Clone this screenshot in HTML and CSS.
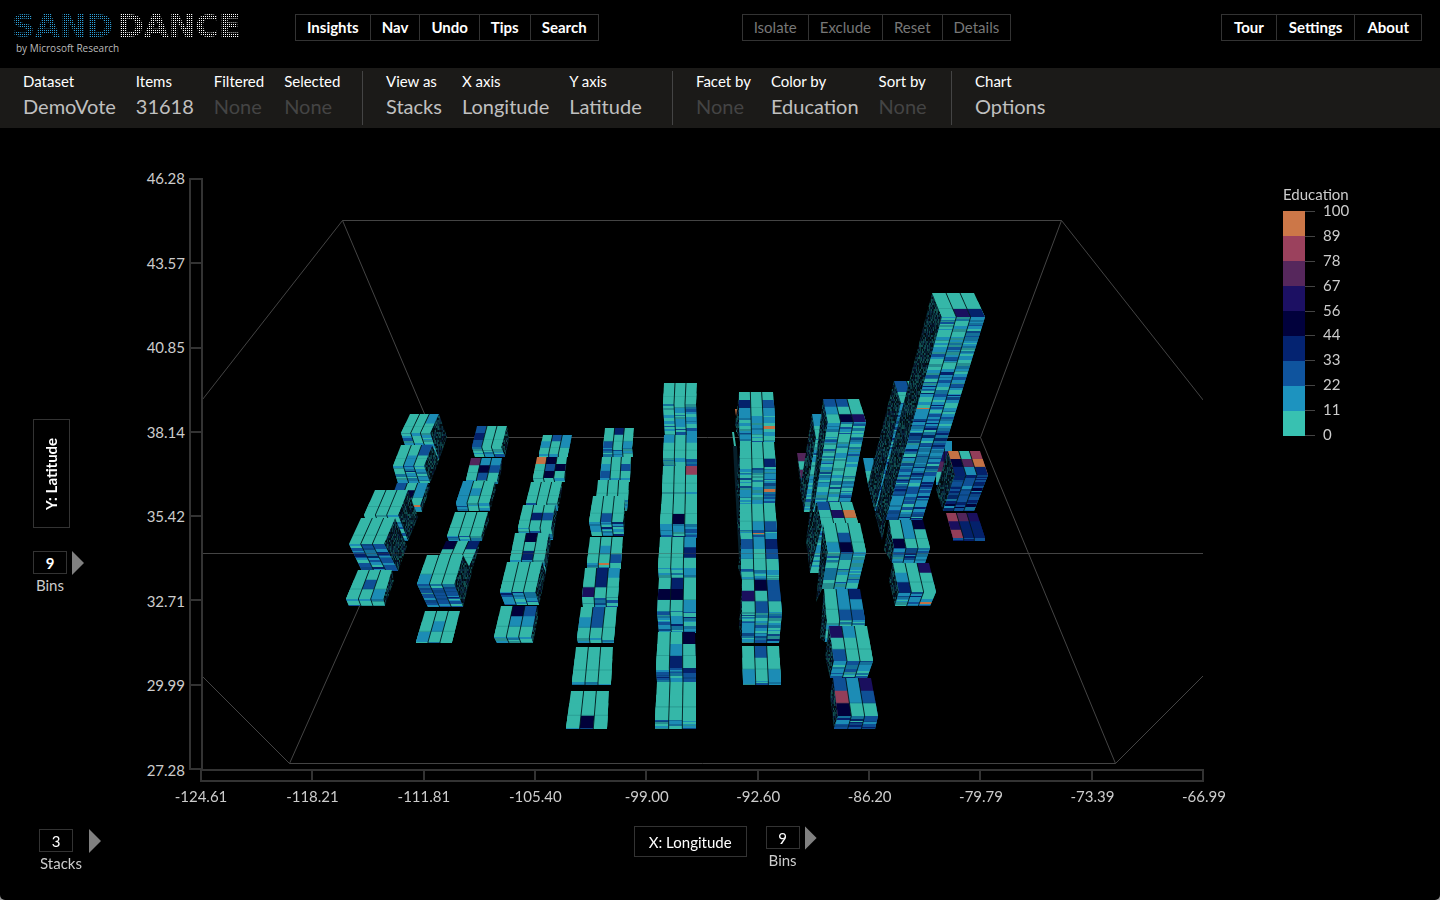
FILE: index.html
```html
<!DOCTYPE html>
<html lang="en">
<head>
    <meta charset="UTF-8">
    <meta name="viewport" content="width=device-width, initial-scale=1.0">
    <title>SandDance</title>
    <link rel="stylesheet" href="styles.css">
</head>
<body>
<div class="app">
    <header class="header">
        <div class="brand">
            <div class="logo"><span class="logo-sand">SAND</span><span class="logo-dance">DANCE</span></div>
            <div class="byline">by Microsoft Research</div>
        </div>
        <nav class="btn-group">
            <button>Insights</button>
            <button>Nav</button>
            <button>Undo</button>
            <button>Tips</button>
            <button>Search</button>
        </nav>
        <div class="btn-group selection-group">
            <button disabled>Isolate</button>
            <button disabled>Exclude</button>
            <button disabled>Reset</button>
            <button disabled>Details</button>
        </div>
        <div class="btn-group right-group">
            <button>Tour</button>
            <button>Settings</button>
            <button>About</button>
        </div>
    </header>

    <div class="toolbar">
        <div class="tool-group data-group">
            <div class="field"><span id="lDataset">Dataset</span><button aria-labelledby="lDataset">DemoVote</button></div>
            <div class="field"><span>Items</span><output>31618</output></div>
            <div class="field"><span>Filtered</span><output class="none">None</output></div>
            <div class="field"><span>Selected</span><output class="none">None</output></div>
        </div>
        <div class="tool-group view-group">
            <div class="field"><span id="lView">View as</span><button aria-labelledby="lView">Stacks</button></div>
            <div class="field"><span id="lX">X axis</span><button aria-labelledby="lX">Longitude</button></div>
            <div class="field"><span id="lY">Y axis</span><button aria-labelledby="lY">Latitude</button></div>
        </div>
        <div class="tool-group map-group">
            <div class="field"><span id="lFacet">Facet by</span><button class="none" aria-labelledby="lFacet">None</button></div>
            <div class="field"><span id="lColor">Color by</span><button aria-labelledby="lColor">Education</button></div>
            <div class="field"><span id="lSort">Sort by</span><button class="none" aria-labelledby="lSort">None</button></div>
        </div>
        <div class="tool-group">
            <div class="field"><span id="lChart">Chart</span><button aria-labelledby="lChart">Options</button></div>
        </div>
    </div>

    <main class="chart">
        <div class="y-controls">
            <button class="axis-btn vertical">Y: Latitude</button>
            <div class="stepper">
                <div class="stepper-row">
                    <input type="text" id="yBins" class="bold" value="9">
                    <button class="arrow" aria-label="More Y bins"></button>
                </div>
                <label for="yBins">Bins</label>
            </div>
        </div>

        <div class="y-labels">
            <span>46.28</span><span>43.57</span><span>40.85</span><span>38.14</span><span>35.42</span><span>32.71</span><span>29.99</span><span>27.28</span>
        </div>
        <div class="y-axis"><i></i><i></i><i></i><i></i><i></i><i></i><i></i></div>

        <canvas id="plot" class="plot" width="1000" height="592"></canvas>

        <div class="legend">
            <div class="legend-title">Education</div>
            <div class="legend-body">
                <div class="legend-bar">
                    <i class="c8"></i><i class="c7"></i><i class="c6"></i><i class="c5"></i><i class="c4"></i><i class="c3"></i><i class="c2"></i><i class="c1"></i><i class="c0"></i>
                </div>
                <div class="legend-ticks"><i></i><i></i><i></i><i></i><i></i><i></i><i></i><i></i><i></i><i></i></div>
                <div class="legend-labels">
                    <span>100</span><span>89</span><span>78</span><span>67</span><span>56</span><span>44</span><span>33</span><span>22</span><span>11</span><span>0</span>
                </div>
            </div>
        </div>

        <div class="x-axis"><i></i><i></i><i></i><i></i><i></i><i></i><i></i><i></i><i></i></div>
        <div class="x-labels">
            <span>-124.61</span><span>-118.21</span><span>-111.81</span><span>-105.40</span><span>-99.00</span><span>-92.60</span><span>-86.20</span><span>-79.79</span><span>-73.39</span><span>-66.99</span>
        </div>
    </main>

    <footer class="footer">
        <div class="stepper stacks">
            <div class="stepper-row">
                <input type="text" id="stacks" value="3">
                <button class="arrow" aria-label="More stacks"></button>
            </div>
            <label for="stacks">Stacks</label>
        </div>
        <div class="x-controls">
            <button class="axis-btn">X: Longitude</button>
            <div class="stepper">
                <div class="stepper-row">
                    <input type="text" id="xBins" value="9">
                    <button class="arrow" aria-label="More X bins"></button>
                </div>
                <label for="xBins">Bins</label>
            </div>
        </div>
    </footer>
</div>
<script src="script.js"></script>
</body>
</html>
```
FILE: styles.css
```css
* {
    margin: 0;
    padding: 0;
    box-sizing: border-box;
}

body {
    font-family: Lato, "Open Sans", sans-serif;
    font-size: 15px;
    background: #999;
    color: #fff;
}

button,
input {
    font: inherit;
    color: inherit;
    background: none;
    border: none;
}

button {
    cursor: pointer;
}

.app {
    min-height: 100vh;
    background: #000;
    border-radius: 0 0 5px 5px;
    overflow: hidden;
}

/* header */
.header {
    display: flex;
    align-items: flex-start;
    height: 68px;
    padding: 14px 18px 0 12px;
}

.brand {
    width: 283px;
}

.logo {
    display: flex;
    gap: 4px;
    height: 24px;
    font-family: "DejaVu Sans", sans-serif;
    font-weight: bold;
    font-size: 32px;
    line-height: 24px;
}

/* letters made of 1px dots on a 2px grid */
.logo span {
    color: transparent;
    background-image:
        repeating-linear-gradient(to right, transparent 0 1px, #000 1px 2px),
        repeating-linear-gradient(to bottom, transparent 0 1px, #000 1px 2px);
    -webkit-background-clip: text;
    background-clip: text;
}

.logo .logo-sand {
    background-color: #2d9fd8;
}

.logo .logo-dance {
    background-color: #fff;
}

.byline {
    margin: 3px 0 0 4px;
    font-family: "Open Sans", sans-serif;
    font-size: 10px;
    line-height: 14px;
    color: #bbb;
}

.btn-group {
    display: flex;
    border: 1px solid #333;
}

.btn-group button {
    height: 25px;
    padding: 0 11px;
    font-weight: bold;
    line-height: 25px;
}

.btn-group button + button {
    border-left: 1px solid #333;
}

.btn-group button:disabled {
    font-weight: normal;
    color: #777;
}

.selection-group {
    margin-left: 143px;
}

.right-group {
    margin-left: auto;
}

.right-group button {
    padding: 0 12px;
}

/* toolbar */
.toolbar {
    display: flex;
    height: 60px;
    padding: 3px 0;
    background: #1b1a18;
}

.tool-group {
    display: flex;
    gap: 20px;
    padding-left: 23px;
}

.tool-group + .tool-group {
    border-left: 1px solid #444;
}

.data-group {
    width: 362px;
}

.view-group {
    width: 310px;
}

.map-group {
    width: 279px;
}

.field {
    display: flex;
    flex-direction: column;
    align-items: flex-start;
}

.field span {
    line-height: 20px;
}

.field button,
.field output {
    font-size: 20px;
    line-height: 30px;
    color: #c0c0c0;
}

.field .none {
    color: #444;
}

/* chart */
.chart {
    display: grid;
    grid-template-columns: 130px 55px 4px 14px 1fr 237px;
    padding-top: 50px;
}

.y-controls {
    display: flex;
    flex-direction: column;
    align-items: flex-start;
    gap: 23px;
    padding: 241px 0 0 33px;
}

.axis-btn {
    height: 31px;
    padding: 0 14px;
    border: 1px solid #333;
}

.axis-btn.vertical {
    width: 37px;
    height: 109px;
    padding: 0;
    writing-mode: vertical-rl;
    rotate: 180deg;
    line-height: 35px;
    font-weight: bold;
}

.stepper-row {
    display: flex;
    gap: 5px;
}

.stepper input {
    width: 34px;
    height: 23px;
    border: 1px solid #333;
    text-align: center;
}

.stepper input.bold {
    font-weight: bold;
}

.stepper label {
    display: block;
    width: 34px;
    line-height: 20px;
    text-align: center;
    color: #ccc;
}

.arrow {
    width: 12px;
    height: 24px;
    background: #808080;
    clip-path: polygon(0 0, 100% 50%, 0 100%);
}

.y-labels,
.y-axis,
.x-axis,
.x-labels,
.legend-labels,
.legend-bar {
    display: flex;
}

.y-labels {
    flex-direction: column;
    justify-content: space-between;
    margin: -10px 0;
    text-align: right;
    line-height: 20px;
    color: #ccc;
}

.y-axis {
    grid-column: 4;
    flex-direction: column;
    border: 2px solid #333;
    border-bottom: none;
}

.y-axis i {
    flex: 1;
    border-bottom: 2px solid #333;
}

.plot {
    display: block;
    width: 100%;
    height: auto;
}

.x-axis {
    grid-column: 5;
    height: 13px;
    margin: -1px -1px 0 -3px;
    border: 2px solid #333;
    border-right: none;
}

.x-axis i {
    flex: 1;
    border-right: 2px solid #333;
}

.x-labels {
    grid-column: 5;
    justify-content: space-between;
    margin: 4px -31px 0 -32px;
    line-height: 20px;
    color: #ccc;
}

.x-labels span {
    width: 60px;
    text-align: center;
}

/* legend */
.legend {
    padding: 6px 0 0 80px;
    color: #ccc;
}

.legend-title {
    line-height: 20px;
}

.legend-body {
    display: flex;
    height: 225px;
    margin-top: 7px;
}

.legend-bar {
    flex-direction: column;
    width: 22px;
}

.legend-bar i {
    flex: 1;
}

.legend-ticks {
    display: flex;
    flex-direction: column;
    justify-content: space-between;
    width: 10px;
}

.legend-ticks i {
    height: 1px;
    background: #444;
}

.legend-labels {
    flex-direction: column;
    justify-content: space-between;
    margin: -11px 0 -8px 8px;
    line-height: 20px;
}

.c0 { background: #38c1b1; }
.c1 { background: #1d93bf; }
.c2 { background: #0f549e; }
.c3 { background: #042371; }
.c4 { background: #01013c; }
.c5 { background: #1c1063; }
.c6 { background: #56275c; }
.c7 { background: #9b415d; }
.c8 { background: #cc7748; }

/* bottom controls */
.footer {
    display: flex;
    align-items: flex-start;
    padding: 20px 0 0 39px;
}

.stacks {
    width: 62px;
    padding-top: 3px;
}

.stacks .stepper-row {
    gap: 16px;
}

.stacks label {
    width: 44px;
}

.x-controls {
    display: flex;
    align-items: flex-start;
    gap: 19px;
    margin-left: 37vw;
}
```
FILE: script.js
```js
var canvas = document.getElementById('plot');
var ctx = canvas.getContext('2d');
ctx.translate(-203, -178);

var colors = ['#35b7a8', '#1c8cb5', '#0f5096', '#04216b', '#01013a', '#1a0f5e', '#52255a', '#933e59', '#c47245'];
var sideColors = ['#03131a', '#061f2a', '#0a3340', '#0d4044', '#0a2740', '#11504f', '#05102a', '#030b10'];

// front face palettes, from light to dark
var tones = ['00000001011100', '0000111011012', '0011112112013', '0112122223123', '2232334233123'];

// back [x, y, w], front [x, y, w], bottom [x, y, w], side corner [x, y] or 0, tone, top face rows
var stacks = [
    [[410,414,29], [401,433,29], [410,460,29], [447,437], 1, '001/000'],
    [[401,445,31], [393,466,31], [398,483,32], [439,461], 2, '002/010'],
    [[397,483,31], [389,505,31], [391,512,31], [430,487], 1, '201/141/000'],
    [[375,490,33], [364,515,34], [374,541,34], [418,517], 1, '000/000'],
    [[361,518,34], [349,544,35], [362,571,36], [407,546], 3, '000'],
    [[358,570,34], [346,599,37], [349,606,36], [394,580], 1, '000/020/001'],

    [[477,426,30], [472,447,29], [475,457,30], [509,438], 1, '200/300/200'],
    [[471,458,31], [466,480,31], [467,484,31], [502,468], 1, '611/042/020'],
    [[463,481,32], [456,503,33], [458,511,32], [496,490], 1, '100/110/100'],
    [[455,512,33], [447,536,34], [449,541,33], [489,520], 1, '000/000'],
    [[446,541,34], [435,566,34], [437,573,34], [479,548], 1, '403/000/000'],
    [[427,555,36], [417,584,37], [428,607,35], [472,572], 3, '000/000/100'],
    [[425,611,35], [416,642,36], [416,643,36], 0, 1, '000/010/100'],

    [[543,435,29], [539,454,29], [539,457,29], 0, 1, '021/101/000'],
    [[537,457,30], [533,478,31], [534,482,31], [566,467], 1, '840/024/040'],
    [[531,482,31], [526,503,31], [527,511,31], [562,490], 1, '000/000'],
    [[523,505,32], [518,528,33], [520,540,33], [557,512], 1, '000/032/000'],
    [[515,533,34], [510,560,34], [512,573,34], [551,542], 1, '040/000/030'],
    [[507,562,35], [500,592,35], [505,605,34], [546,573], 2, '000/000/000'],
    [[501,606,36], [494,637,37], [497,643,36], [538,617], 1, '042/011/000'],

    [[605,428,29], [603,448,29], [603,457,30], 0, 1, '030/000/201'],
    [[602,457,29], [600,478,30], [600,482,30], 0, 1, '000/102/200'],
    [[598,480,31], [596,500,32], [597,511,30], [628,488], 0, '000/000'],
    [[593,496,32], [589,522,34], [592,536,32], [625,505], 2, '000/000/020'],
    [[590,537,33], [587,563,34], [587,569,34], 0, 1, '000/010/002'],
    [[585,568,35], [582,597,36], [583,607,35], 0, 1, '031/030/500'],
    [[581,607,36], [577,638,37], [578,643,36], 0, 1, '020/120/000'],
    [[576,647,37], [572,682,39], [572,685,39], 0, 1, '000/000/000'],
    [[571,691,38], [566,728,41], [566,729,41], 0, 1, '000/000/040'],

    [[664,383,33], [663,404,33], [665,436,32], 0, 1, '000/000'],
    [[664,435,33], [663,458,34], [664,467,33], 0, 1, '101/000/000'],
    [[663,466,34], [662,492,35], [662,495,35], 0, 0, '007/000/000'],
    [[662,494,35], [660,524,37], [661,538,36], 0, 2, '000/000/040'],
    [[660,537,36], [658,568,38], [659,579,37], 0, 1, '001/003/000'],
    [[659,578,37], [657,611,39], [659,633,37], 0, 2, '030/440/001'],
    [[658,632,37], [656,668,40], [657,682,39], 0, 3, '004/010/030'],
    [[657,682,39], [655,720,41], [655,729,41], 0, 1, '000/000/000'],

    [[739,392,34], [739,416,36], [740,442,35], [735,425], 1, '000/302/101'],
    [[740,442,34], [740,467,36], [740,505,35], [736,490], 1, '000/000/003'],
    [[740,504,35], [740,530,37], [741,540,36], [737,525], 1, '000/000/012'],
    [[741,539,36], [741,569,38], [742,580,37], [738,568], 1, '213/102/000'],
    [[742,580,37], [742,612,40], [742,643,37], [739,625], 2, '042/502/020'],
    [[742,646,37], [743,681,38], [743,685,38], 0, 1, '020/000/101'],

    // eastern columns, the low ones behind first
    [[797,453,30], [801,478,30], [805,512,30], [799,474], 3, '600/000/600'],
    [[812,414,34], [816,438,36], [804,512,33], [800,490], 1, '111/000'],
    [[823,399,36], [828,422,38], [815,503,35], [806,542], 1, '220/100/045'],
    [[817,502,35], [822,526,37], [810,573,35], [806,542], 1, '200/058/000'],
    [[823,523,37], [828,552,38], [822,589,35], [816,602], 1, '000/020/140'],
    [[824,589,36], [827,620,38], [825,642,38], [820,638], 0, '013/011/022'],
    [[829,626,38], [834,661,39], [830,678,37], [825,655], 2, '510/000/200'],
    [[833,678,38], [838,716,40], [834,729,41], [830,695], 3, '215/712/400'],

    [[863,458,32], [868,484,32], [875,511,30], [866,475], 2, '111/000'],
    [[894,381,38], [901,403,38], [875,511,34], [868,484], 2, '202/000'],
    [[937,441,15], [936,482,16], [936,485,16], 0, 2, '11/55/66/00'],
    [[932,293,42], [942,317,43], [886,520,36], [875,514], 5, '000/000/053'],
    [[948,451,32], [955,475,33], [943,511,31], [936,490], 4, '807/468/313'],
    [[946,513,31], [953,538,32], [953,541,32], 0, 4, '765/533/733'],
    [[889,520,34], [894,548,36], [892,563,33], [884,550], 2, '014/010/400'],
    [[893,563,36], [899,592,37], [895,606,35], [889,580], 2, '005/100/300']
];

// small seeded generator, so the stripes stay the same on every load
var seed = 7;
function rand() {
    seed = (seed * 16807) % 2147483647;
    return seed / 2147483647;
}

function pick(list) {
    return list[Math.floor(rand() * list.length)];
}

function path(points) {
    ctx.beginPath();
    points.forEach(function (p) {
        ctx.lineTo(p[0], p[1]);
    });
    ctx.closePath();
}

// point on a face between edges a and b: u across, v from a down to b
function at(a, b, u, v) {
    var left = a[0] + (b[0] - a[0]) * v;
    var width = a[2] + (b[2] - a[2]) * v;
    return [left + width * u, a[1] + (b[1] - a[1]) * v];
}

function cell(a, b, u0, u1, v0, v1, color) {
    path([at(a, b, u0, v0), at(a, b, u1, v0), at(a, b, u1, v1), at(a, b, u0, v1)]);
    ctx.fillStyle = color;
    ctx.fill();
}

function drawSide(back, front, bottom, corner) {
    var onLeft = corner[0] < bottom[0] + 5;
    var u = onLeft ? 0 : 1;
    var pts = [at(back, back, u, 0), at(front, front, u, 0), at(bottom, bottom, u, 0), corner];
    // tall towers show the side of the rows standing behind their foot
    if (bottom[1] - front[1] > 190) {
        pts.splice(3, 0, [882, 541]);
    }
    path(pts);
    ctx.save();
    ctx.clip();
    var xs = pts.map(function (p) { return p[0]; });
    var ys = pts.map(function (p) { return p[1]; });
    for (var y = Math.min.apply(null, ys); y < Math.max.apply(null, ys); y += 2) {
        for (var x = Math.min.apply(null, xs); x < Math.max.apply(null, xs); x += 1) {
            ctx.fillStyle = pick(sideColors);
            ctx.fillRect(Math.floor(x), Math.floor(y), 1, 2);
        }
    }
    ctx.restore();
}

function drawFront(front, bottom, tone, cols) {
    var h = bottom[1] - front[1];
    for (var c = 0; c < cols; c++) {
        // solid base, so no gaps show between the stripes
        cell(front, bottom, c / cols, (c + 1) / cols, 0, 1, colors[1]);
        var y = 0;
        while (y < h) {
            var step = 1 + Math.floor(rand() * 2.6);
            var t = tone;
            if (tone === 5) {
                t = Math.min(3, Math.floor(1 + y / h * 2.4 + rand() * 0.7));
            }
            var end = Math.min(h, y + step);
            var color = rand() < 0.005 ? colors[8] : colors[+pick(tones[t])];
            cell(front, bottom, c / cols, (c + 1) / cols, y / h, end / h, color);
            if (rand() < 0.3) {
                cell(front, bottom, c / cols, (c + 1) / cols, y / h, end / h, 'rgba(4, 50, 90, 0.3)');
            }
            y = end;
        }
    }
}

function seams(a, b, cols) {
    ctx.strokeStyle = 'rgba(0, 20, 24, 0.85)';
    ctx.lineWidth = 1;
    for (var c = 1; c < cols; c++) {
        var p = at(a, b, c / cols, 0);
        var q = at(a, b, c / cols, 1);
        ctx.beginPath();
        ctx.moveTo(p[0], p[1]);
        ctx.lineTo(q[0], q[1]);
        ctx.stroke();
    }
}

function drawStack(s) {
    var rows = s[5].split('/');
    var cols = rows[0].length;
    if (s[3]) {
        drawSide(s[0], s[1], s[2], s[3]);
    }
    drawFront(s[1], s[2], s[4], cols);
    seams(s[1], s[2], cols);
    // every row runs down to the front edge and the next one covers it
    rows.forEach(function (row, r) {
        for (var c = 0; c < cols; c++) {
            cell(s[0], s[1], c / cols, (c + 1) / cols, r / rows.length, 1, colors[row[c]]);
        }
    });
    // faint line between records of the top layer
    cell(s[0], s[1], 0, 1, 0.64, 0.67, 'rgba(0, 60, 70, 0.2)');
    seams(s[0], s[1], cols);
}

function line(color, pts) {
    ctx.strokeStyle = color;
    ctx.lineWidth = 1;
    ctx.beginPath();
    pts.forEach(function (p) {
        ctx.lineTo(p[0] + 0.5, p[1] + 0.5);
    });
    ctx.stroke();
}

// room outline
line('#444', [[202, 399], [342, 220], [1061, 220], [1203, 400]]);
line('#444', [[342, 220], [434, 437], [980, 437], [1061, 220]]);
line('#444', [[434, 437], [289, 763], [1115, 763], [980, 437]]);
line('#444', [[202, 676], [289, 763]]);
line('#444', [[1115, 763], [1203, 675]]);
line('#444', [[202, 553], [1203, 553]]);

// edges of stacks hidden behind the -92.60 column
cell([735, 409, 3], [736, 416, 3], 0, 1, 0, 1, colors[8]);
cell([736, 416, 3], [736, 432, 4], 0, 1, 0, 1, '#1f7d78');
cell([732, 432, 2], [734, 446, 2], 0, 1, 0, 1, colors[0]);
cell([733, 446, 4], [739, 560, 3], 0, 1, 0, 1, '#06202c');

stacks.forEach(drawStack);
line('rgba(70, 70, 70, 0.35)', [[202, 553], [1203, 553]]);
```
